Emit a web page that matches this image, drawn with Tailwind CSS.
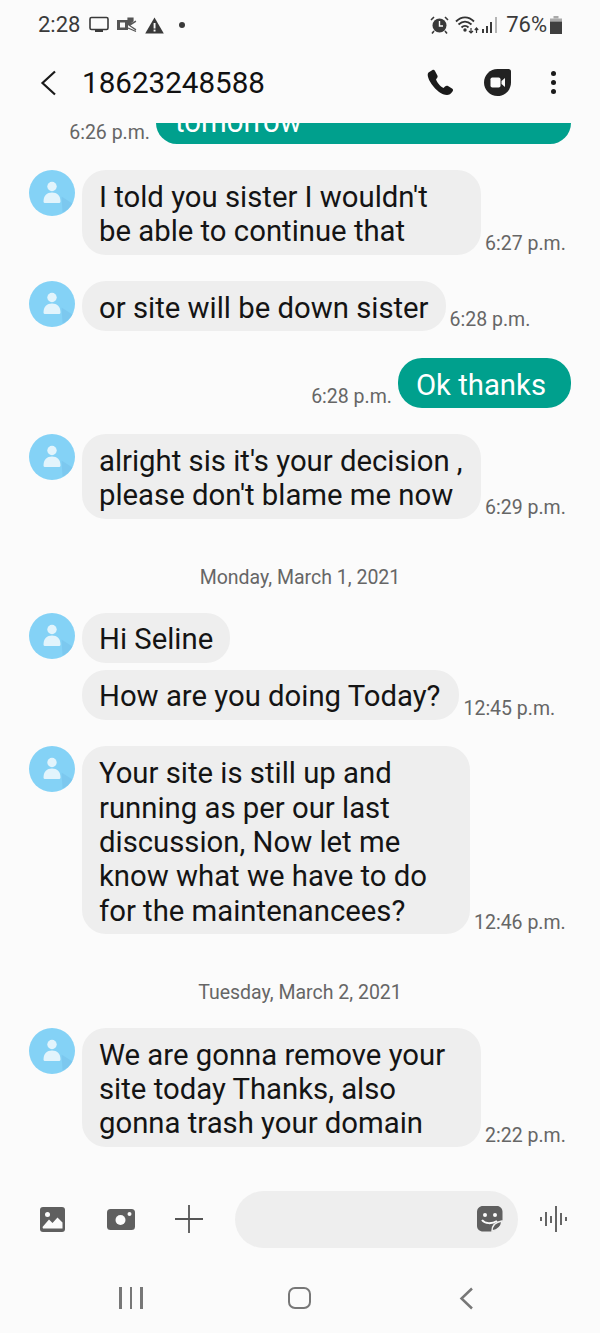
<!DOCTYPE html>
<html lang="en">
<head>
  <meta charset="UTF-8">
  <meta name="viewport" content="width=device-width, initial-scale=1.0">
  <title>18623248588</title>
  <script src="https://cdn.jsdelivr.net/npm/@tailwindcss/browser@4"></script>
</head>
<body class="bg-[#fbfbfb] text-[#1a1a1a] font-['Roboto',sans-serif]">
  <div class="w-[600px] h-[1333px] overflow-hidden flex flex-col">
    <!-- Status bar -->
    <div class="h-[50px] pl-[38px] pr-[38px] flex items-center justify-between text-[#3a3a3a]">
      <div class="flex items-center">
        <span class="text-[22px] leading-[50px]">2:28</span>
        <svg class="ml-[9px]" width="20" height="18" viewBox="0 0 20 18"><rect x="1" y="1.500" width="18" height="12" rx="1.500" fill="none" stroke="#3a3a3a" stroke-width="1.600"/><rect x="6" y="14" width="8" height="2" fill="#3a3a3a"/></svg>
        <svg class="ml-[8px]" width="20" height="16" viewBox="0 0 20 16"><rect x="0" y="3" width="11" height="10" fill="#555"/><rect x="3" y="5.500" width="5" height="5" fill="#fbfbfb"/><path d="M11 1h5v3l-5 3.500zM19 4l-7 4 7 5M11 11l8 3.500" fill="#555" stroke="#555" stroke-width="1.200"/><path d="M13.500 8.500 19 5v7Z" fill="#fbfbfb"/></svg>
        <svg class="ml-[8px]" width="19" height="17" viewBox="0 0 19 17"><path d="M9.500 0.500 18.800 16.500H0.200Z" fill="#3a3a3a"/><rect x="8.600" y="6" width="1.900" height="5.500" fill="#fbfbfb"/><rect x="8.600" y="12.600" width="1.900" height="1.900" fill="#fbfbfb"/></svg>
        <span class="ml-[15px] w-[6px] h-[6px] rounded-full bg-[#3a3a3a]"></span>
      </div>
      <div class="flex items-center">
        <svg width="19" height="18" viewBox="0 0 19 18"><circle cx="9.500" cy="9.500" r="7" fill="#3a3a3a"/><path d="M9.500 5v5h3.500" fill="none" stroke="#fbfbfb" stroke-width="1.400"/><path d="M1 4l3-3M18 4l-3-3M4 15l-2 2.500M15 15l2 2.500" stroke="#3a3a3a" stroke-width="1.600" fill="none"/></svg>
        <svg class="ml-[6px]" width="24" height="18" viewBox="0 0 24 18"><path d="M1 5.500C6.500 0 13.500 0 19 5.500M3.500 8.500C8 4.500 12 4.500 16.500 8.500M6.500 11.500C8.500 9.500 11.500 9.500 13.500 11.500" fill="none" stroke="#333" stroke-width="1.800"/><circle cx="10" cy="14" r="1.700" fill="#333"/><path d="M16 12v5M14 15l2 2 2-2M21.500 17v-5M19.800 14l1.700-2 1.700 2" fill="none" stroke="#333" stroke-width="1.200"/></svg>
        <svg class="ml-[3px]" width="16" height="18" viewBox="0 0 16 18"><rect x="0" y="13" width="2" height="4" fill="#3a3a3a"/><rect x="4" y="10" width="2" height="7" fill="#3a3a3a"/><rect x="8" y="6" width="2" height="11" fill="#3a3a3a"/><rect x="13" y="1" width="2" height="16" fill="#b5b5b5"/></svg>
        <span class="ml-[8px] text-[22px] leading-[50px]">76%</span>
        <svg class="ml-[3px]" width="12" height="18" viewBox="0 0 12 18"><rect x="3.500" y="0" width="5" height="2.500" fill="#aaa"/><rect x="0" y="2.500" width="12" height="3" fill="#aaa"/><rect x="0" y="5.500" width="12" height="12.500" fill="#3f3f3f"/></svg>
      </div>
    </div>

    <!-- Header -->
    <header class="h-[73px] flex items-center justify-between pl-[40px] pr-[44px] pb-[8px]">
      <div class="flex items-center">
        <svg width="17" height="26" viewBox="0 0 17 26"><path d="M15 1.500 2.500 13 15 24.500" fill="none" stroke="#1a1a1a" stroke-width="2.200"/></svg>
        <h1 class="ml-[25px] text-[29.600px] leading-[34px] text-[#111]">18623248588</h1>
      </div>
      <div class="flex items-center">
        <svg width="27" height="27" viewBox="0 0 27 27"><path d="M5.500 1 1.500 3.500C0 5 .5 9 4.500 15 9 21.500 15 26 20 26c2 0 4-1 5.500-3.500 1-1.300.5-2.300-.5-3L21 17c-1-.6-2-.4-3 .5l-1.500 1.500c-2-.7-5.500-4-7.500-8.500L10 9c.7-.8.8-1.500.4-2.500L8 2C7.500 1 6.500.5 5.500 1Z" fill="#1a1a1a"/></svg>
        <svg class="ml-[30px]" width="27" height="27" viewBox="0 0 27 27"><path d="M13.500 0H24.500C26 0 27 1 27 2.500V13.500C27 21 21 27 13.500 27S0 21 0 13.500 6 0 13.500 0Z" fill="#222"/><rect x="6.500" y="8.500" width="10" height="10" rx="1.800" fill="#fbfbfb"/><path d="M17.500 12 21 9V18L17.500 15Z" fill="#fbfbfb"/></svg>
        <div class="ml-[40px] flex flex-col gap-[4px]">
          <span class="w-[5px] h-[5px] rounded-full bg-[#1a1a1a]"></span>
          <span class="w-[5px] h-[5px] rounded-full bg-[#1a1a1a]"></span>
          <span class="w-[5px] h-[5px] rounded-full bg-[#1a1a1a]"></span>
        </div>
      </div>
    </header>

    <!-- Messages -->
    <main class="h-[1050px] flex flex-col text-[29.300px] leading-[34.300px] text-[#141414]">
      <div class="h-[21px] flex justify-end pr-[29px]">
        <span class="self-start mr-[6px] text-[19.500px] leading-[20px] text-[#666]">6:26 p.m.</span>
        <div class="w-[415px] h-[21px] overflow-hidden rounded-b-[24px] bg-[#00a08d] text-white pl-[19px] flex items-end">
          <span class="mb-[5px]">tomorrow</span>
        </div>
      </div>

      <div class="mt-[26px] flex pl-[29px]">
        <svg class="shrink-0" width="46" height="46" viewBox="0.500 0.500 46 46"><circle cx="23.500" cy="23.500" r="23" fill="#84d2f6"/><path d="M34 43A23 23 0 0 0 44 34L33 27Z" fill="#7cc8ef"/><circle cx="23.500" cy="17" r="4.700" fill="#e2f4fc"/><path d="M15 32c0-6 3.500-9 8.500-9s8.500 3 8.500 9c0 1-.8 1.500-2 1.500H17c-1.200 0-2-.5-2-1.500Z" fill="#e2f4fc"/></svg>
        <div class="ml-[7px] w-[399px] px-[17px] pt-[10px] pb-[6px] rounded-[24px] bg-[#eeeeee]">I told you sister I wouldn't<br>be able to continue that</div>
        <span class="self-end ml-[4px] mb-[1px] text-[19.500px] leading-[20px] text-[#666]">6:27 p.m.</span>
      </div>

      <div class="mt-[26px] flex pl-[29px]">
        <svg class="shrink-0" width="46" height="46" viewBox="0.500 0.500 46 46"><circle cx="23.500" cy="23.500" r="23" fill="#84d2f6"/><path d="M34 43A23 23 0 0 0 44 34L33 27Z" fill="#7cc8ef"/><circle cx="23.500" cy="17" r="4.700" fill="#e2f4fc"/><path d="M15 32c0-6 3.500-9 8.500-9s8.500 3 8.500 9c0 1-.8 1.500-2 1.500H17c-1.200 0-2-.5-2-1.500Z" fill="#e2f4fc"/></svg>
        <div class="ml-[7px] px-[17px] pt-[10px] pb-[6px] rounded-[24px] bg-[#eeeeee] whitespace-nowrap">or site will be down sister</div>
        <span class="self-end ml-[4px] mb-[1px] text-[19.500px] leading-[20px] text-[#666]">6:28 p.m.</span>
      </div>

      <div class="mt-[27px] flex justify-end pr-[29px]">
        <span class="self-end mr-[6px] mb-[1px] text-[19.500px] leading-[20px] text-[#666]">6:28 p.m.</span>
        <div class="pl-[18px] pr-[25px] pt-[10px] pb-[6px] rounded-[24px] bg-[#00a08d] text-white whitespace-nowrap">Ok thanks</div>
      </div>

      <div class="mt-[26px] flex pl-[29px]">
        <svg class="shrink-0" width="46" height="46" viewBox="0.500 0.500 46 46"><circle cx="23.500" cy="23.500" r="23" fill="#84d2f6"/><path d="M34 43A23 23 0 0 0 44 34L33 27Z" fill="#7cc8ef"/><circle cx="23.500" cy="17" r="4.700" fill="#e2f4fc"/><path d="M15 32c0-6 3.500-9 8.500-9s8.500 3 8.500 9c0 1-.8 1.500-2 1.500H17c-1.200 0-2-.5-2-1.500Z" fill="#e2f4fc"/></svg>
        <div class="ml-[7px] w-[399px] px-[17px] pt-[10px] pb-[6px] rounded-[24px] bg-[#eeeeee]">alright sis it's your decision ,<br>please don't blame me now</div>
        <span class="self-end ml-[4px] mb-[1px] text-[19.500px] leading-[20px] text-[#666]">6:29 p.m.</span>
      </div>

      <div class="mt-[49px] mb-[25px] text-center text-[19.500px] leading-[20px] text-[#666]">Monday, March 1, 2021</div>

      <div class="flex pl-[29px]">
        <svg class="shrink-0" width="46" height="46" viewBox="0.500 0.500 46 46"><circle cx="23.500" cy="23.500" r="23" fill="#84d2f6"/><path d="M34 43A23 23 0 0 0 44 34L33 27Z" fill="#7cc8ef"/><circle cx="23.500" cy="17" r="4.700" fill="#e2f4fc"/><path d="M15 32c0-6 3.500-9 8.500-9s8.500 3 8.500 9c0 1-.8 1.500-2 1.500H17c-1.200 0-2-.5-2-1.500Z" fill="#e2f4fc"/></svg>
        <div class="ml-[7px] px-[17px] pt-[9px] pb-[7px] rounded-[24px] bg-[#eeeeee] whitespace-nowrap">Hi Seline</div>
      </div>
      <div class="mt-[7px] flex pl-[82px]">
        <div class="pl-[17px] pr-[19px] pt-[9px] pb-[7px] rounded-[24px] bg-[#eeeeee] whitespace-nowrap">How are you doing Today?</div>
        <span class="self-end ml-[4px] mb-[1px] text-[19.500px] leading-[20px] text-[#666]">12:45 p.m.</span>
      </div>

      <div class="mt-[26px] flex pl-[29px]">
        <svg class="shrink-0" width="46" height="46" viewBox="0.500 0.500 46 46"><circle cx="23.500" cy="23.500" r="23" fill="#84d2f6"/><path d="M34 43A23 23 0 0 0 44 34L33 27Z" fill="#7cc8ef"/><circle cx="23.500" cy="17" r="4.700" fill="#e2f4fc"/><path d="M15 32c0-6 3.500-9 8.500-9s8.500 3 8.500 9c0 1-.8 1.500-2 1.500H17c-1.200 0-2-.5-2-1.500Z" fill="#e2f4fc"/></svg>
        <div class="ml-[7px] w-[388px] px-[17px] pt-[10px] pb-[6px] rounded-[24px] bg-[#eeeeee]">Your site is still up and<br>running as per our last<br>discussion, Now let me<br>know what we have to do<br>for the maintenancees?</div>
        <span class="self-end ml-[4px] mb-[1px] text-[19.500px] leading-[20px] text-[#666]">12:46 p.m.</span>
      </div>

      <div class="mt-[49px] mb-[25px] text-center text-[19.500px] leading-[20px] text-[#666]">Tuesday, March 2, 2021</div>

      <div class="flex pl-[29px]">
        <svg class="shrink-0" width="46" height="46" viewBox="0.500 0.500 46 46"><circle cx="23.500" cy="23.500" r="23" fill="#84d2f6"/><path d="M34 43A23 23 0 0 0 44 34L33 27Z" fill="#7cc8ef"/><circle cx="23.500" cy="17" r="4.700" fill="#e2f4fc"/><path d="M15 32c0-6 3.500-9 8.500-9s8.500 3 8.500 9c0 1-.8 1.500-2 1.500H17c-1.200 0-2-.5-2-1.500Z" fill="#e2f4fc"/></svg>
        <div class="ml-[7px] w-[399px] px-[17px] pt-[10px] pb-[6px] rounded-[24px] bg-[#eeeeee]">We are gonna remove your<br>site today Thanks, also<br>gonna trash your domain</div>
        <span class="self-end ml-[4px] mb-[1px] text-[19.500px] leading-[20px] text-[#666]">2:22 p.m.</span>
      </div>

      <!-- Composer -->
      <div class="mt-[44px] h-[57px] flex items-center pl-[40px]">
        <svg width="25" height="25" viewBox="0 0 25 25"><rect width="25" height="25" rx="3" fill="#5f5f5f"/><circle cx="7.500" cy="7.500" r="2.500" fill="#fbfbfb"/><path d="M2.500 20 9 12.500l3.500 3.500 5-5.500 5 5V21.500H3Z" fill="#fbfbfb"/></svg>
        <svg class="ml-[42px]" width="28" height="21" viewBox="0 0 28 21"><rect width="28" height="21" rx="3.500" fill="#5f5f5f"/><circle cx="13.500" cy="11" r="5" fill="#fbfbfb"/><circle cx="22.500" cy="5" r="2" fill="#fbfbfb"/></svg>
        <svg class="ml-[40px]" width="28" height="28" viewBox="0 0 28 28"><path d="M14 0V28M0 14H28" stroke="#555" stroke-width="1.800"/></svg>
        <div class="ml-[32px] w-[283px] h-[57px] rounded-full bg-[#eeeeee] flex items-center justify-end pr-[15px]">
          <svg width="26" height="26" viewBox="0 0 26 26"><path d="M6 0H20C23 0 25.500 2.500 25.500 6V15L15 25.500H6C2.500 25.500 0 23 0 20V6C0 2.500 2.500 0 6 0Z" fill="#5f5f5f"/><circle cx="8" cy="9" r="2" fill="#fbfbfb"/><circle cx="18" cy="9" r="2" fill="#fbfbfb"/><path d="M5 14c3 4 10 4 15 1" fill="none" stroke="#fbfbfb" stroke-width="2"/><path d="M15 25c0-6 4-9 10-10-.5 5-4 9-10 10Z" fill="#5f5f5f" stroke="#eeeeee" stroke-width="1.500"/></svg>
        </div>
        <svg class="ml-[22px]" width="28" height="26" viewBox="0 0 28 26"><path d="M1 11v4M6 6v14M11 10v7M16 0v26M21 7v12M26 11v4" stroke="#555" stroke-width="1.800"/></svg>
      </div>

      <!-- Nav bar -->
      <nav class="mt-[39px] flex items-center">
        <div class="ml-[119px] flex gap-[8px]">
          <span class="w-[2.500px] h-[22px] bg-[#777]"></span>
          <span class="w-[2.500px] h-[22px] bg-[#777]"></span>
          <span class="w-[2.500px] h-[22px] bg-[#777]"></span>
        </div>
        <span class="ml-[145px] w-[23px] h-[22px] rounded-[7px] border-[2.500px] border-[#777]"></span>
        <svg class="ml-[148px]" width="15" height="23" viewBox="0 0 15 23"><path d="M13 1.500 2.500 11.500 13 21.500" fill="none" stroke="#777" stroke-width="2.500"/></svg>
      </nav>
    </main>
  </div>
</body>
</html>
